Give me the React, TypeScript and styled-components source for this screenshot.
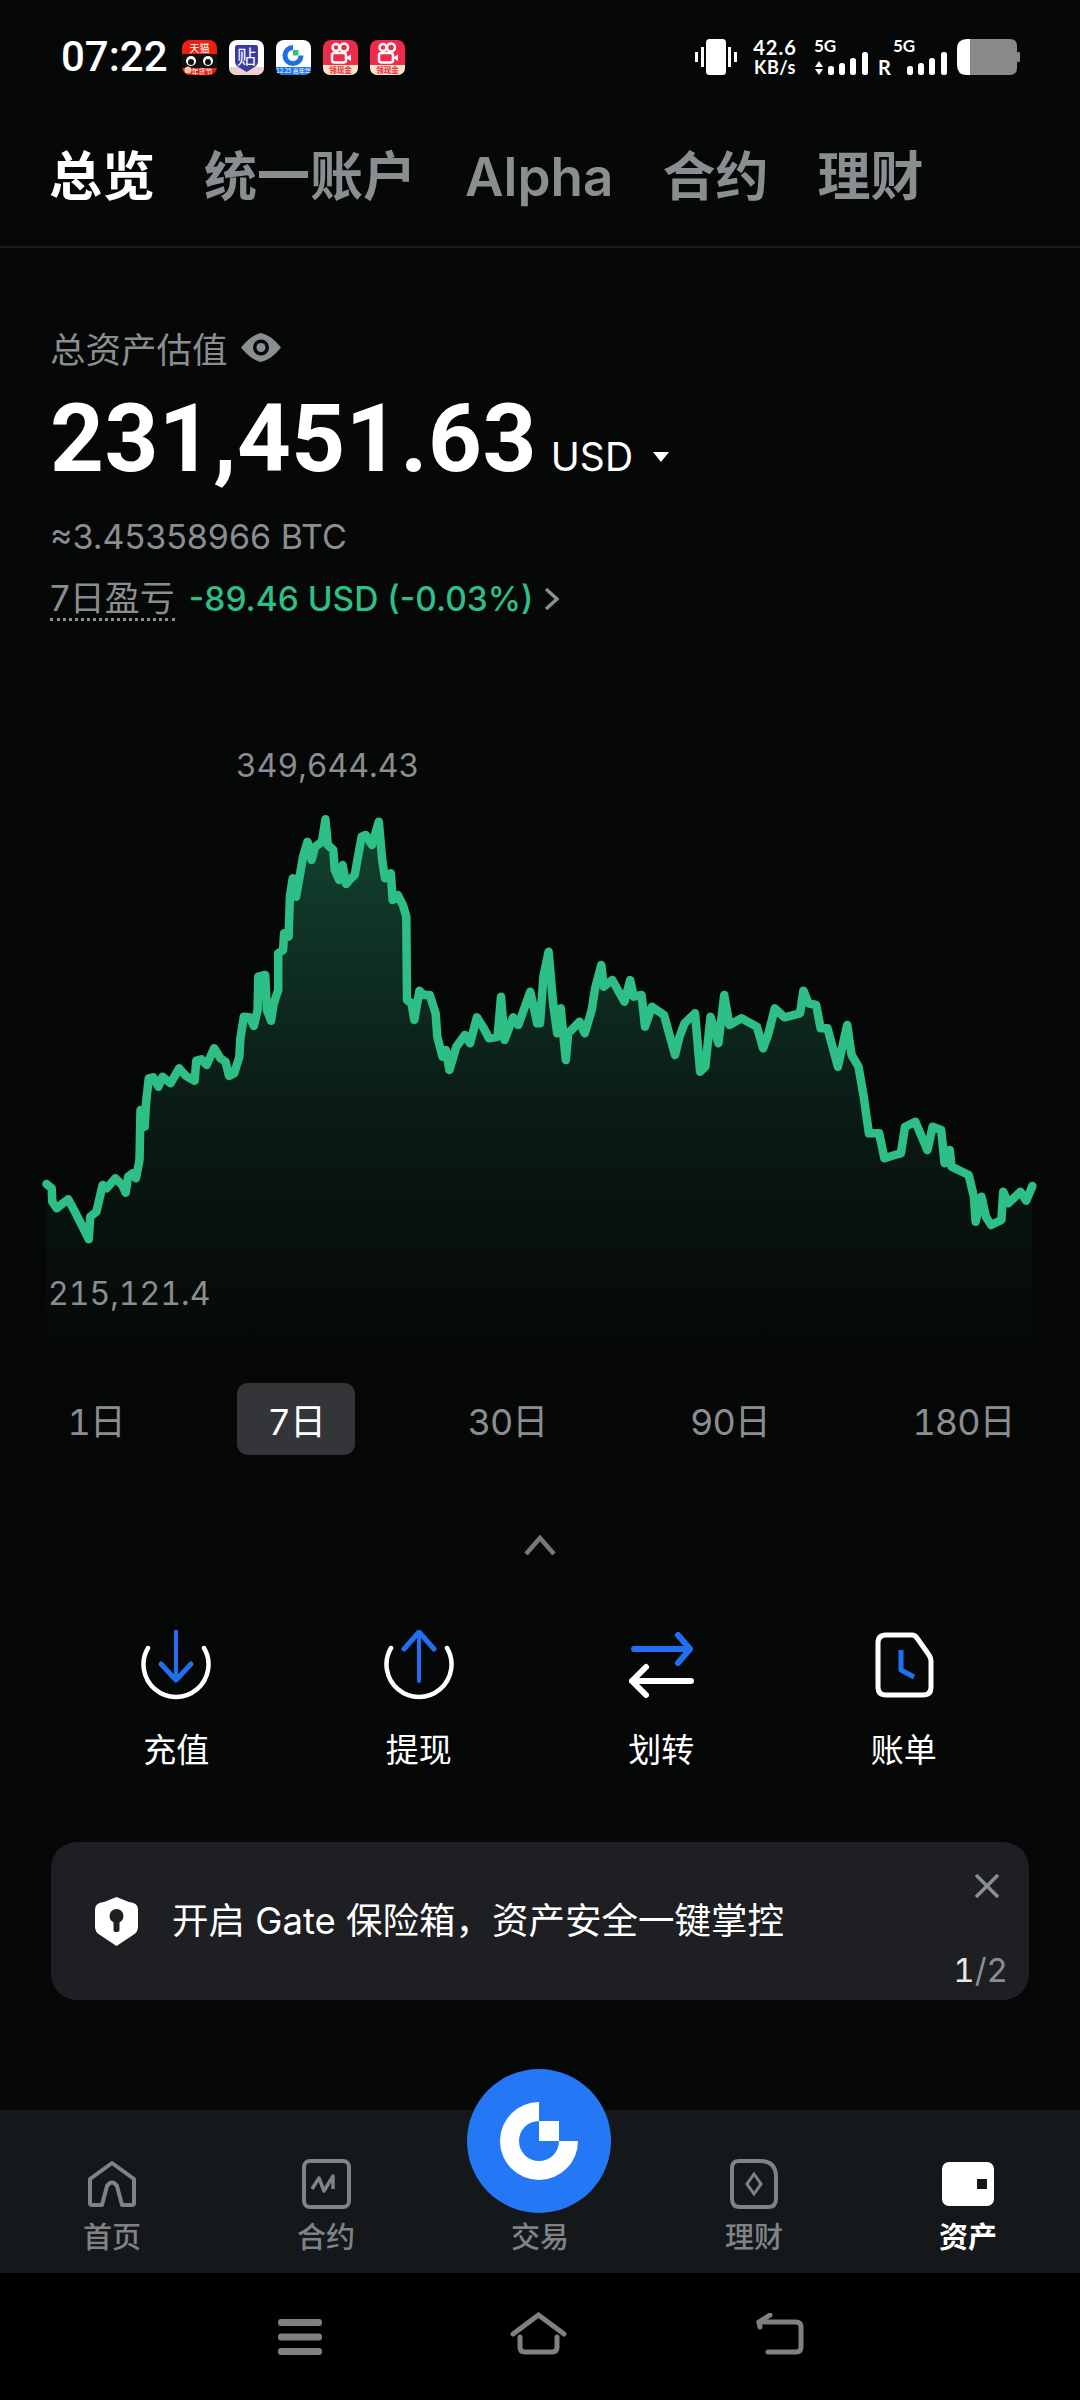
import React from "react";
import styled, { createGlobalStyle } from "styled-components";

const GRAY = "#8b8e91";
const GREEN = "#2dbf85";
const BLUE = "#1f6ff0";
const NAV_GRAY = "#808386";
const FONT = `Inter, "Noto Sans CJK SC", sans-serif`;

const GlobalStyle = createGlobalStyle`
  html, body { margin: 0; padding: 0; background: #060808; }
  * { box-sizing: border-box; }
`;

const Page = styled.div`
  width: 1080px;
  height: 2400px;
  overflow: hidden;
  background: #060808;
  color: #fff;
  font-family: ${FONT};
`;

const StatusBar = styled.div`
  height: 75px;
  padding: 39px 60px 0 61px;
  display: flex;
  justify-content: space-between;
  align-items: center;
`;
const StatusLeft = styled.div`
  display: flex;
  align-items: center;
`;
const Clock = styled.div`
  font: 500 42px/36px Roboto, sans-serif;
  width: 121px;
`;
const AppIcons = styled.div`
  display: flex;
  gap: 12px;
`;
const StatusRight = styled.div`
  display: flex;
  align-items: center;
`;
const Speed = styled.div`
  width: 46px;
  height: 36px;
  margin: 0 16px 0 15px;
  font: 700 20px/16px Lato, "Open Sans", sans-serif;
  letter-spacing: 1px;
  white-space: nowrap;
  display: flex;
  flex-direction: column;
  justify-content: space-between;
  align-items: center;
`;
const SpeedUnit = styled.span`
  font-size: 18px;
  letter-spacing: 0.5px;
`;
const SignalBox = styled.div<{ $width: number }>`
  width: ${(p) => p.$width}px;
  height: 36px;
  display: flex;
  flex-direction: column;
  justify-content: space-between;
`;
const SignalLabel = styled.span<{ $indent: number }>`
  margin-left: ${(p) => p.$indent}px;
  font: 700 17px/13px Lato, sans-serif;
`;
const SignalRow = styled.div`
  display: flex;
  align-items: flex-end;
  justify-content: space-between;
  height: 23px;
`;
const Roaming = styled.span`
  margin-left: 10px;
  font: 700 20px/16px Lato, sans-serif;
`;
const BatterySlot = styled.div`
  margin-left: 10px;
  display: flex;
`;

const Tabs = styled.div`
  display: flex;
  gap: 49px;
  padding: 77px 49px 44px;
  border-bottom: 2px solid #1a1d20;
`;
const Tab = styled.div<{ $active?: boolean }>`
  font-size: 53px;
  line-height: 50px;
  font-weight: ${(p) => (p.$active ? 700 : 600)};
  color: ${(p) => (p.$active ? "#fff" : GRAY)};
  white-space: nowrap;
`;

const Summary = styled.section`
  padding: 81px 0 0 50px;
  height: 492px;
`;
const LabelRow = styled.div`
  display: flex;
  align-items: center;
  gap: 13px;
  height: 36px;
  font-size: 35.5px;
  color: ${GRAY};
`;
const AmountRow = styled.div`
  display: flex;
  align-items: baseline;
  margin-top: 28px;
  height: 92px;
`;
const Amount = styled.div`
  font: 700 94px/92px Roboto, sans-serif;
  letter-spacing: 0.5px;
`;
const Currency = styled.span`
  font-size: 39px;
  margin-left: 14px;
`;
const Caret = styled.span`
  width: 0;
  height: 0;
  margin-left: 20px;
  border-left: 8px solid transparent;
  border-right: 8px solid transparent;
  border-top: 10px solid #fff;
  transform: translateY(-9px);
`;
const BtcLine = styled.div`
  margin-top: 32px;
  font-size: 34px;
  line-height: 40px;
  color: ${GRAY};
`;
const PnlRow = styled.div`
  display: flex;
  align-items: center;
  margin-top: 20px;
  height: 44px;
`;
const PnlLabel = styled.span`
  font-size: 35px;
  line-height: 40px;
  color: ${GRAY};
  border-bottom: 3px dotted ${GRAY};
  margin-right: 14px;
`;
const PnlValue = styled.span`
  font-size: 33.5px;
  font-weight: 500;
  color: ${GREEN};
  margin-right: 11px;
`;

const ChartWrap = styled.div`
  position: relative;
  height: 610px;
`;
const ChartSvg = styled.svg`
  display: block;
`;
const ChartTag = styled.span<{ $x: number; $y: number }>`
  position: absolute;
  left: ${(p) => p.$x}px;
  top: ${(p) => p.$y}px;
  font-size: 32px;
  line-height: 40px;
  font-variant-numeric: tabular-nums;
  color: ${GRAY};
`;

const Ranges = styled.div`
  display: flex;
  justify-content: space-between;
  margin-top: 33px;
  padding: 0 35px 0 37px;
`;
const Range = styled.div<{ $active?: boolean }>`
  height: 72px;
  padding: 0 30.5px;
  display: flex;
  align-items: center;
  border-radius: 11px;
  font-size: 36px;
  letter-spacing: -1px;
  font-variant-numeric: tabular-nums;
  color: ${(p) => (p.$active ? "#fff" : GRAY)};
  background: ${(p) => (p.$active ? "#343538" : "transparent")};
`;

const Collapse = styled.div`
  display: flex;
  justify-content: center;
  margin-top: 80px;
  height: 20px;
`;

const Actions = styled.div`
  display: grid;
  grid-template-columns: repeat(4, 1fr);
  margin-top: 75px;
  padding: 0 55px;
`;
const Action = styled.div`
  display: flex;
  flex-direction: column;
  align-items: center;
`;
const ActionLabel = styled.span`
  margin-top: 29px;
  font-size: 33px;
  line-height: 38px;
`;

const Banner = styled.div`
  position: relative;
  display: flex;
  align-items: center;
  gap: 34px;
  height: 158px;
  margin: 73px 51px 0;
  padding: 0 0 0 44px;
  border-radius: 26px;
  background: #1d1f23;
`;
const BannerText = styled.span`
  font-size: 36.5px;
  line-height: 40px;
  white-space: nowrap;
`;
const CloseIcon = styled.svg`
  position: absolute;
  top: 32px;
  right: 30px;
`;
const Pager = styled.div`
  position: absolute;
  right: 21px;
  bottom: 10px;
  font-size: 33px;
  line-height: 40px;
  font-variant-numeric: tabular-nums;
  color: ${GRAY};
`;
const PagerCurrent = styled.span`
  color: #e6e6e6;
`;

const BottomNav = styled.nav`
  display: grid;
  grid-template-columns: repeat(5, 1fr);
  height: 163px;
  margin-top: 110px;
  padding: 0 5px;
  background: #15181b;
`;
const NavItem = styled.div<{ $active?: boolean }>`
  position: relative;
  display: flex;
  flex-direction: column;
  align-items: center;
  padding-top: 48px;
  color: ${(p) => (p.$active ? "#fff" : NAV_GRAY)};
`;
const NavIconBox = styled.div`
  height: 52px;
  display: flex;
  align-items: center;
`;
const NavLabel = styled.span<{ $active?: boolean }>`
  margin-top: 12px;
  font-size: 29px;
  line-height: 32px;
  font-weight: ${(p) => (p.$active ? 700 : 500)};
`;
const TradeButton = styled.div`
  position: absolute;
  top: -41px;
  left: calc(50% - 1px);
  transform: translateX(-50%);
  width: 144px;
  height: 144px;
  border-radius: 50%;
  background: #2478f5;
  display: flex;
  align-items: center;
  justify-content: center;
`;

const SystemNav = styled.div`
  height: 127px;
  background: #000;
  padding: 39px 0 45px 1px;
  display: flex;
  justify-content: center;
  align-items: flex-end;
  gap: 188px;
`;

// traced from the curve, split at x=540 so the two halves can be read apart
const LEFT: number[][] = [
  [135, 1212], [150, 1225], [152, 1265], [165, 1285], [180, 1272], [198, 1258], [215, 1290], [240, 1340], [258, 1378], [262, 1310],
  [280, 1295], [290, 1250], [298, 1215], [310, 1225], [335, 1195], [355, 1215], [365, 1238], [372, 1190], [385, 1180], [395, 1195],
  [405, 1140], [408, 990], [420, 1040], [425, 960], [432, 895], [445, 892], [460, 920], [472, 890], [495, 910], [520, 865],
  [540, 888], [565, 902], [570, 842], [585, 838], [600, 855], [622, 805], [640, 835], [655, 845], [665, 888], [680, 880],
  [695, 830], [698, 775], [708, 710], [725, 712], [737, 738], [748, 690], [750, 590], [770, 585], [775, 690], [787, 722],
  [795, 670], [808, 630], [808, 520], [822, 510], [825, 460], [838, 470], [842, 350], [850, 295], [860, 350], [870, 290],
  [880, 230], [893, 185], [905, 240], [915, 200], [935, 185], [945, 118], [952, 195], [968, 210], [972, 270], [985, 300],
  [995, 255], [1005, 312], [1015, 300], [1030, 285], [1050, 170], [1062, 165], [1080, 195], [1100, 125], [1110, 240], [1118, 295],
  [1135, 280], [1140, 360], [1155, 345], [1170, 375], [1180, 410], [1182, 660], [1195, 670], [1203, 720], [1218, 632], [1230, 645],
  [1248, 645], [1265, 700], [1270, 770], [1285, 830], [1295, 810], [1305, 870], [1325, 800], [1350, 765], [1365, 790], [1385, 712],
  [1405, 745], [1420, 775], [1445, 770], [1455, 650], [1465, 780], [1490, 712], [1505, 735], [1540, 635], [1560, 730],
];
const RIGHT: number[][] = [
  [0, 730], [10, 590], [25, 515], [38, 670], [50, 760], [60, 685], [75, 840], [82, 760], [115, 725], [130, 760],
  [150, 690], [160, 625], [178, 555], [185, 620], [210, 600], [245, 665], [262, 600], [272, 650], [295, 645], [305, 740],
  [325, 680], [360, 705], [375, 760], [392, 825], [405, 770], [420, 730], [450, 700], [465, 875], [480, 860], [495, 710],
  [518, 790], [535, 645], [550, 735], [585, 715], [630, 740], [648, 805], [662, 765], [682, 685], [710, 712], [755, 700],
  [765, 632], [780, 670], [802, 675], [815, 745], [835, 745], [865, 860], [892, 735], [905, 825], [925, 860], [940, 950],
  [955, 1060], [985, 1060], [1000, 1135], [1030, 1125], [1048, 1120], [1060, 1040], [1090, 1025], [1125, 1110], [1140, 1040], [1165, 1050],
  [1175, 1150], [1190, 1110], [1195, 1160], [1245, 1185], [1260, 1250], [1265, 1325], [1282, 1250], [1295, 1310], [1310, 1335], [1340, 1320],
  [1345, 1235], [1360, 1270], [1395, 1235], [1412, 1262], [1430, 1218],
];
const CHART_TOP = 740;
const CHART_HEIGHT = 610;
const toPoint = (offset: number) => ([x, y]: number[]) =>
  `${(offset + x / 2.904).toFixed(1)} ${(780 + y / 3 - CHART_TOP).toFixed(1)}`;
const linePoints = [...LEFT.map(toPoint(0)), ...RIGHT.map(toPoint(540))];
const linePath = "M" + linePoints.join("L");
const areaPath = `${linePath}L1032 ${CHART_HEIGHT}L46 ${CHART_HEIGHT}Z`;

const Chart = () => (
  <ChartWrap>
    <ChartSvg width={1080} height={CHART_HEIGHT} viewBox={`0 0 1080 ${CHART_HEIGHT}`}>
      <defs>
        <linearGradient id="area" gradientUnits="userSpaceOnUse" x1="0" y1="79" x2="0" y2={CHART_HEIGHT}>
          <stop offset="0" stopColor={GREEN} stopOpacity="0.32" />
          <stop offset="0.55" stopColor={GREEN} stopOpacity="0.1" />
          <stop offset="1" stopColor={GREEN} stopOpacity="0" />
        </linearGradient>
      </defs>
      <path d={areaPath} fill="url(#area)" />
      <path d={linePath} fill="none" stroke={GREEN} strokeWidth="8.5" strokeLinejoin="round" strokeLinecap="round" />
    </ChartSvg>
    <ChartTag $x={236} $y={6}>349,644.43</ChartTag>
    <ChartTag $x={48} $y={534}>215,121.4</ChartTag>
  </ChartWrap>
);

const AppShell = ({ children }: { children: React.ReactNode }) => (
  <svg width="35" height="35" viewBox="0 0 35 35" fontFamily={`"Noto Sans CJK SC", sans-serif`}>
    {children}
  </svg>
);

const TmallIcon = () => (
  <AppShell>
    <rect width="35" height="35" rx="8" fill="#e8220f" />
    <path d="M0 14 H35 V28 H0 Z" fill="#111" />
    <text x="17.5" y="12" fontSize="10" fill="#fff" textAnchor="middle">天猫</text>
    <circle cx="9" cy="21" r="5" fill="#fff" />
    <circle cx="26" cy="21" r="5" fill="#fff" />
    <circle cx="9" cy="22" r="3" fill="#111" />
    <circle cx="26" cy="22" r="3" fill="#111" />
    <text x="20" y="33.5" fontSize="7" fill="#fff" textAnchor="middle">年货节</text>
    <circle cx="6" cy="30" r="3.5" fill="#f5c9a0" />
  </AppShell>
);
const TieIcon = () => (
  <AppShell>
    <rect width="35" height="35" rx="8" fill="#fff" />
    <path d="M0 27 H35 V27 Q35 35 27 35 H8 Q0 35 0 27Z" fill="#f0d0cc" />
    <path d="M6 7 Q6 5 8 5 H27 Q29 5 29 7 V21 Q29 26 24 28 L17.5 32 L11 28 Q6 26 6 21Z" fill="#3a3aa6" />
    <text x="17.5" y="24" fontSize="19" fill="#fff" textAnchor="middle">贴</text>
  </AppShell>
);
const GateAppIcon = () => (
  <AppShell>
    <rect width="35" height="35" rx="8" fill="#fff" />
    <path d="M0 27 H35 Q35 35 27 35 H8 Q0 35 0 27Z" fill="#1f78ea" />
    <path d="M17 5 A10.5 10.5 0 1 0 27.5 15.5 H22.5 A5.5 5.5 0 1 1 17 10Z" fill="#1f6fe5" />
    <rect x="17" y="10" width="5.500" height="5.500" fill="#2ec27e" />
    <text x="17.500" y="33" fontSize="6" fill="#fff" textAnchor="middle">12.25 嘉年华</text>
  </AppShell>
);
const KwaiIcon = () => (
  <AppShell>
    <rect width="35" height="35" rx="8" fill="#ef2b4c" />
    <path d="M0 25 H35 V27 Q35 35 27 35 H8 Q0 35 0 27Z" fill="#fbe6c8" />
    <g fill="none" stroke="#fff" strokeWidth="2.5">
      <circle cx="13" cy="7.5" r="3.500" />
      <circle cx="21" cy="7.500" r="4" />
      <rect x="9" y="13" width="14" height="9.500" rx="2.500" />
    </g>
    <path d="M24 17 L28 14.500 V21 L24 18.500Z" fill="#fff" />
    <text x="17.500" y="33" fontSize="7.500" fontWeight="700" fill="#e8283f" textAnchor="middle">领现金</text>
  </AppShell>
);

const Vibrate = () => (
  <svg width="42" height="36" viewBox="0 0 42 36" fill="#fff">
    <rect x="11" y="0" width="20" height="36" rx="3.500" />
    <rect x="0" y="13" width="3" height="10" />
    <rect x="6" y="8" width="3" height="20" />
    <rect x="33" y="8" width="3" height="20" />
    <rect x="39" y="13" width="3" height="10" />
  </svg>
);

const BARS = [
  { x: 0, h: 9 },
  { x: 11, h: 12 },
  { x: 22, h: 17 },
  { x: 34, h: 23 },
];
const Bars = () => (
  <svg width="40" height="23" viewBox="0 0 40 23" fill="#fff">
    {BARS.map((b) => (
      <rect key={b.x} x={b.x} y={23 - b.h} width="6" height={b.h} rx="2.500" />
    ))}
  </svg>
);
const UpDown = () => (
  <svg width="10" height="14" viewBox="0 0 10 14" fill="#fff">
    <path d="M1 6 L5 0 L9 6Z M1 8 H9 L5 14Z" />
  </svg>
);

const Battery = () => (
  <svg width="63" height="36" viewBox="0 0 63 36">
    <path d="M10 0 H13 V36 H10 Q0 36 0 26 V10 Q0 0 10 0Z" fill="#fff" />
    <path d="M13 0 H53 Q60 0 60 7 V29 Q60 36 53 36 H13Z" fill="#888a88" />
    <rect x="60" y="13" width="3" height="10" rx="1" fill="#888a88" />
  </svg>
);

const EyeIcon = () => (
  <svg width="40" height="29" viewBox="0 0 40 29">
    <path d="M0 14.500 Q10 2 20 0 Q30 2 40 14.500 Q30 27 20 29 Q10 27 0 14.500Z" fill={GRAY} />
    <circle cx="20" cy="14.500" r="8" fill="#060808" />
    <circle cx="20" cy="14.500" r="4.500" fill={GRAY} />
  </svg>
);

const ChevronRight = () => (
  <svg width="15" height="24" viewBox="0 0 15 24" fill="none" stroke={GRAY} strokeWidth="3.500">
    <path d="M2 2 L13 12 L2 22" />
  </svg>
);

const ARC = "M8 18 A32.500 32.500 0 1 0 64 18";
const ICON_STROKE = { fill: "none", strokeLinecap: "round", strokeLinejoin: "round" } as const;

const DepositIcon = () => (
  <svg width="72" height="72" viewBox="0 0 72 72" {...ICON_STROKE}>
    <path d={ARC} stroke="#fff" strokeWidth="4.500" />
    <path d="M36 1 V50" stroke={BLUE} strokeWidth="4" />
    <path d="M21 34 L36 50 L51 34" stroke={BLUE} strokeWidth="5" />
  </svg>
);
const WithdrawIcon = () => (
  <svg width="72" height="72" viewBox="0 0 72 72" {...ICON_STROKE}>
    <path d={ARC} stroke="#fff" strokeWidth="4.500" />
    <path d="M36 51 V2" stroke={BLUE} strokeWidth="4" />
    <path d="M21 19 L36 2 L51 19" stroke={BLUE} strokeWidth="5" />
  </svg>
);
const TransferIcon = () => (
  <svg width="72" height="72" viewBox="0 0 72 72" {...ICON_STROKE}>
    <path d="M9 19 H65 M53 5 L65 19 L53 33" stroke={BLUE} strokeWidth="6" />
    <path d="M7 51 H66 M21 37 L7 51 L21 65" stroke="#fff" strokeWidth="6" />
  </svg>
);
const BillIcon = () => (
  <svg width="72" height="72" viewBox="0 0 72 72" {...ICON_STROKE}>
    <path d="M18 5 H44 Q47 5 49 8 L61 25 Q63 28 63 31 V57 Q63 65 55 65 H18 Q10 65 10 57 V13 Q10 5 18 5Z" stroke="#fff" strokeWidth="5" />
    <path d="M33 20 V40 L46 47" stroke={BLUE} strokeWidth="5" strokeLinecap="butt" />
  </svg>
);

const ShieldIcon = () => (
  <svg width="43" height="49" viewBox="0 0 43 49">
    <path d="M21.500 0 L34 5 Q43 6 43 12 V30 Q43 35 38 38 L21.500 49 L5 38 Q0 35 0 30 V12 Q0 6 9 5Z" fill="#fff" />
    <circle cx="21.500" cy="19" r="7" fill="#1d1f23" />
    <rect x="18.500" y="20" width="6" height="15" rx="2" fill="#1d1f23" />
  </svg>
);

const HomeNavIcon = () => (
  <svg width="48" height="46" viewBox="0 0 48 46" fill="none" stroke="currentColor" strokeWidth="4" strokeLinejoin="round">
    <path d="M2 42 V18 L24 2 L46 18 V42 Q46 44 44 44 H34 L29 25 Q24 18 19 25 L14 44 H4 Q2 44 2 42Z" />
  </svg>
);
const ContractNavIcon = () => (
  <svg width="49" height="50" viewBox="0 0 49 50" fill="none" stroke="currentColor" strokeWidth="4">
    <rect x="2" y="2" width="45" height="46" rx="6" />
    <path d="M10 30 L17 19 L22 32 L31 17 L31 30" strokeWidth="3.500" strokeLinejoin="round" />
  </svg>
);
const EarnNavIcon = () => (
  <svg width="48" height="50" viewBox="0 0 48 50" fill="none" stroke="currentColor" strokeWidth="4">
    <path d="M9 2 H30 Q46 2 46 18 V40 Q46 48 38 48 H10 Q2 48 2 40 V9 Q2 2 9 2Z" />
    <path d="M24 15 L31 25 L24 35 L17 25Z" strokeWidth="3" />
  </svg>
);
const WalletNavIcon = () => (
  <svg width="52" height="44" viewBox="0 0 52 44">
    <rect width="52" height="44" rx="7" fill="#fff" />
    <rect x="35" y="17" width="10" height="10" fill="#15181b" />
  </svg>
);
const GateLogo = () => (
  <svg width="78" height="78" viewBox="0 0 78 78" fill="#fff">
    <path d="M39 0 A39 39 0 1 0 78 39 H59 A20 20 0 1 1 39 19Z" />
    <rect x="39" y="19" width="20" height="20" />
  </svg>
);

const MenuKey = () => (
  <svg width="44" height="36" viewBox="0 0 44 36" fill="#808080">
    <rect y="0" width="44" height="7" rx="3" />
    <rect y="14.500" width="44" height="7" rx="3" />
    <rect y="29" width="44" height="7" rx="3" />
  </svg>
);
const HomeKey = () => (
  <svg width="57" height="43" viewBox="0 0 57 43" fill="none" stroke="#808080" strokeWidth="5" strokeLinecap="round">
    <path d="M3 22 L28.500 3 L54 22" />
    <path d="M10 25 V35 Q10 40 15 40 H42 Q47 40 47 35 V25" />
  </svg>
);
const BackKey = () => (
  <svg width="49" height="42" viewBox="0 0 49 42" fill="none" stroke="#808080" strokeWidth="5" strokeLinecap="round">
    <path d="M4 9 H41 Q46 9 46 14 V34 Q46 39 41 39 H13" />
    <path d="M15 2 L4 9 L5 14" strokeLinejoin="round" />
  </svg>
);

const ACTIONS = [
  { label: "充值", icon: <DepositIcon /> },
  { label: "提现", icon: <WithdrawIcon /> },
  { label: "划转", icon: <TransferIcon /> },
  { label: "账单", icon: <BillIcon /> },
];

const RANGES = ["1日", "7日", "30日", "90日", "180日"];
const TABS = ["总览", "统一账户", "Alpha", "合约", "理财"];

const App = () => (
  <Page>
    <GlobalStyle />
    <StatusBar>
      <StatusLeft>
        <Clock>07:22</Clock>
        <AppIcons>
          <TmallIcon />
          <TieIcon />
          <GateAppIcon />
          <KwaiIcon />
          <KwaiIcon />
        </AppIcons>
      </StatusLeft>
      <StatusRight>
        <Vibrate />
        <Speed>
          <span>42.6</span>
          <SpeedUnit>KB/s</SpeedUnit>
        </Speed>
        <SignalBox $width={54}>
          <SignalLabel $indent={0}>5G</SignalLabel>
          <SignalRow>
            <UpDown />
            <Bars />
          </SignalRow>
        </SignalBox>
        <SignalBox $width={79}>
          <SignalLabel $indent={25}>5G</SignalLabel>
          <SignalRow>
            <Roaming>R</Roaming>
            <Bars />
          </SignalRow>
        </SignalBox>
        <BatterySlot>
          <Battery />
        </BatterySlot>
      </StatusRight>
    </StatusBar>

    <Tabs>
      {TABS.map((t, i) => (
        <Tab key={t} $active={i === 0}>{t}</Tab>
      ))}
    </Tabs>

    <Summary>
      <LabelRow>
        总资产估值
        <EyeIcon />
      </LabelRow>
      <AmountRow>
        <Amount>231,451.63</Amount>
        <Currency>USD</Currency>
        <Caret />
      </AmountRow>
      <BtcLine>≈3.45358966 BTC</BtcLine>
      <PnlRow>
        <PnlLabel>7日盈亏</PnlLabel>
        <PnlValue>-89.46 USD (-0.03%)</PnlValue>
        <ChevronRight />
      </PnlRow>
    </Summary>

    <Chart />

    <Ranges>
      {RANGES.map((r) => (
        <Range key={r} $active={r === "7日"}>{r}</Range>
      ))}
    </Ranges>

    <Collapse>
      <svg width="32" height="20" viewBox="0 0 32 20" fill="none" stroke="#77797b" strokeWidth="4.500">
        <path d="M2 19 L16 3 L30 19" />
      </svg>
    </Collapse>

    <Actions>
      {ACTIONS.map((a) => (
        <Action key={a.label}>
          {a.icon}
          <ActionLabel>{a.label}</ActionLabel>
        </Action>
      ))}
    </Actions>

    <Banner>
      <ShieldIcon />
      <BannerText>开启 Gate 保险箱，资产安全一键掌控</BannerText>
      <CloseIcon width="24" height="24" viewBox="0 0 24 24" fill="none" stroke={GRAY} strokeWidth="3.500">
        <path d="M1 1 L23 23 M23 1 L1 23" />
      </CloseIcon>
      <Pager>
        <PagerCurrent>1</PagerCurrent>/2
      </Pager>
    </Banner>

    <BottomNav>
      <NavItem>
        <NavIconBox><HomeNavIcon /></NavIconBox>
        <NavLabel>首页</NavLabel>
      </NavItem>
      <NavItem>
        <NavIconBox><ContractNavIcon /></NavIconBox>
        <NavLabel>合约</NavLabel>
      </NavItem>
      <NavItem>
        <TradeButton><GateLogo /></TradeButton>
        <NavIconBox />
        <NavLabel>交易</NavLabel>
      </NavItem>
      <NavItem>
        <NavIconBox><EarnNavIcon /></NavIconBox>
        <NavLabel>理财</NavLabel>
      </NavItem>
      <NavItem $active>
        <NavIconBox><WalletNavIcon /></NavIconBox>
        <NavLabel $active>资产</NavLabel>
      </NavItem>
    </BottomNav>

    <SystemNav>
      <MenuKey />
      <HomeKey />
      <BackKey />
    </SystemNav>
  </Page>
);

export default App;
